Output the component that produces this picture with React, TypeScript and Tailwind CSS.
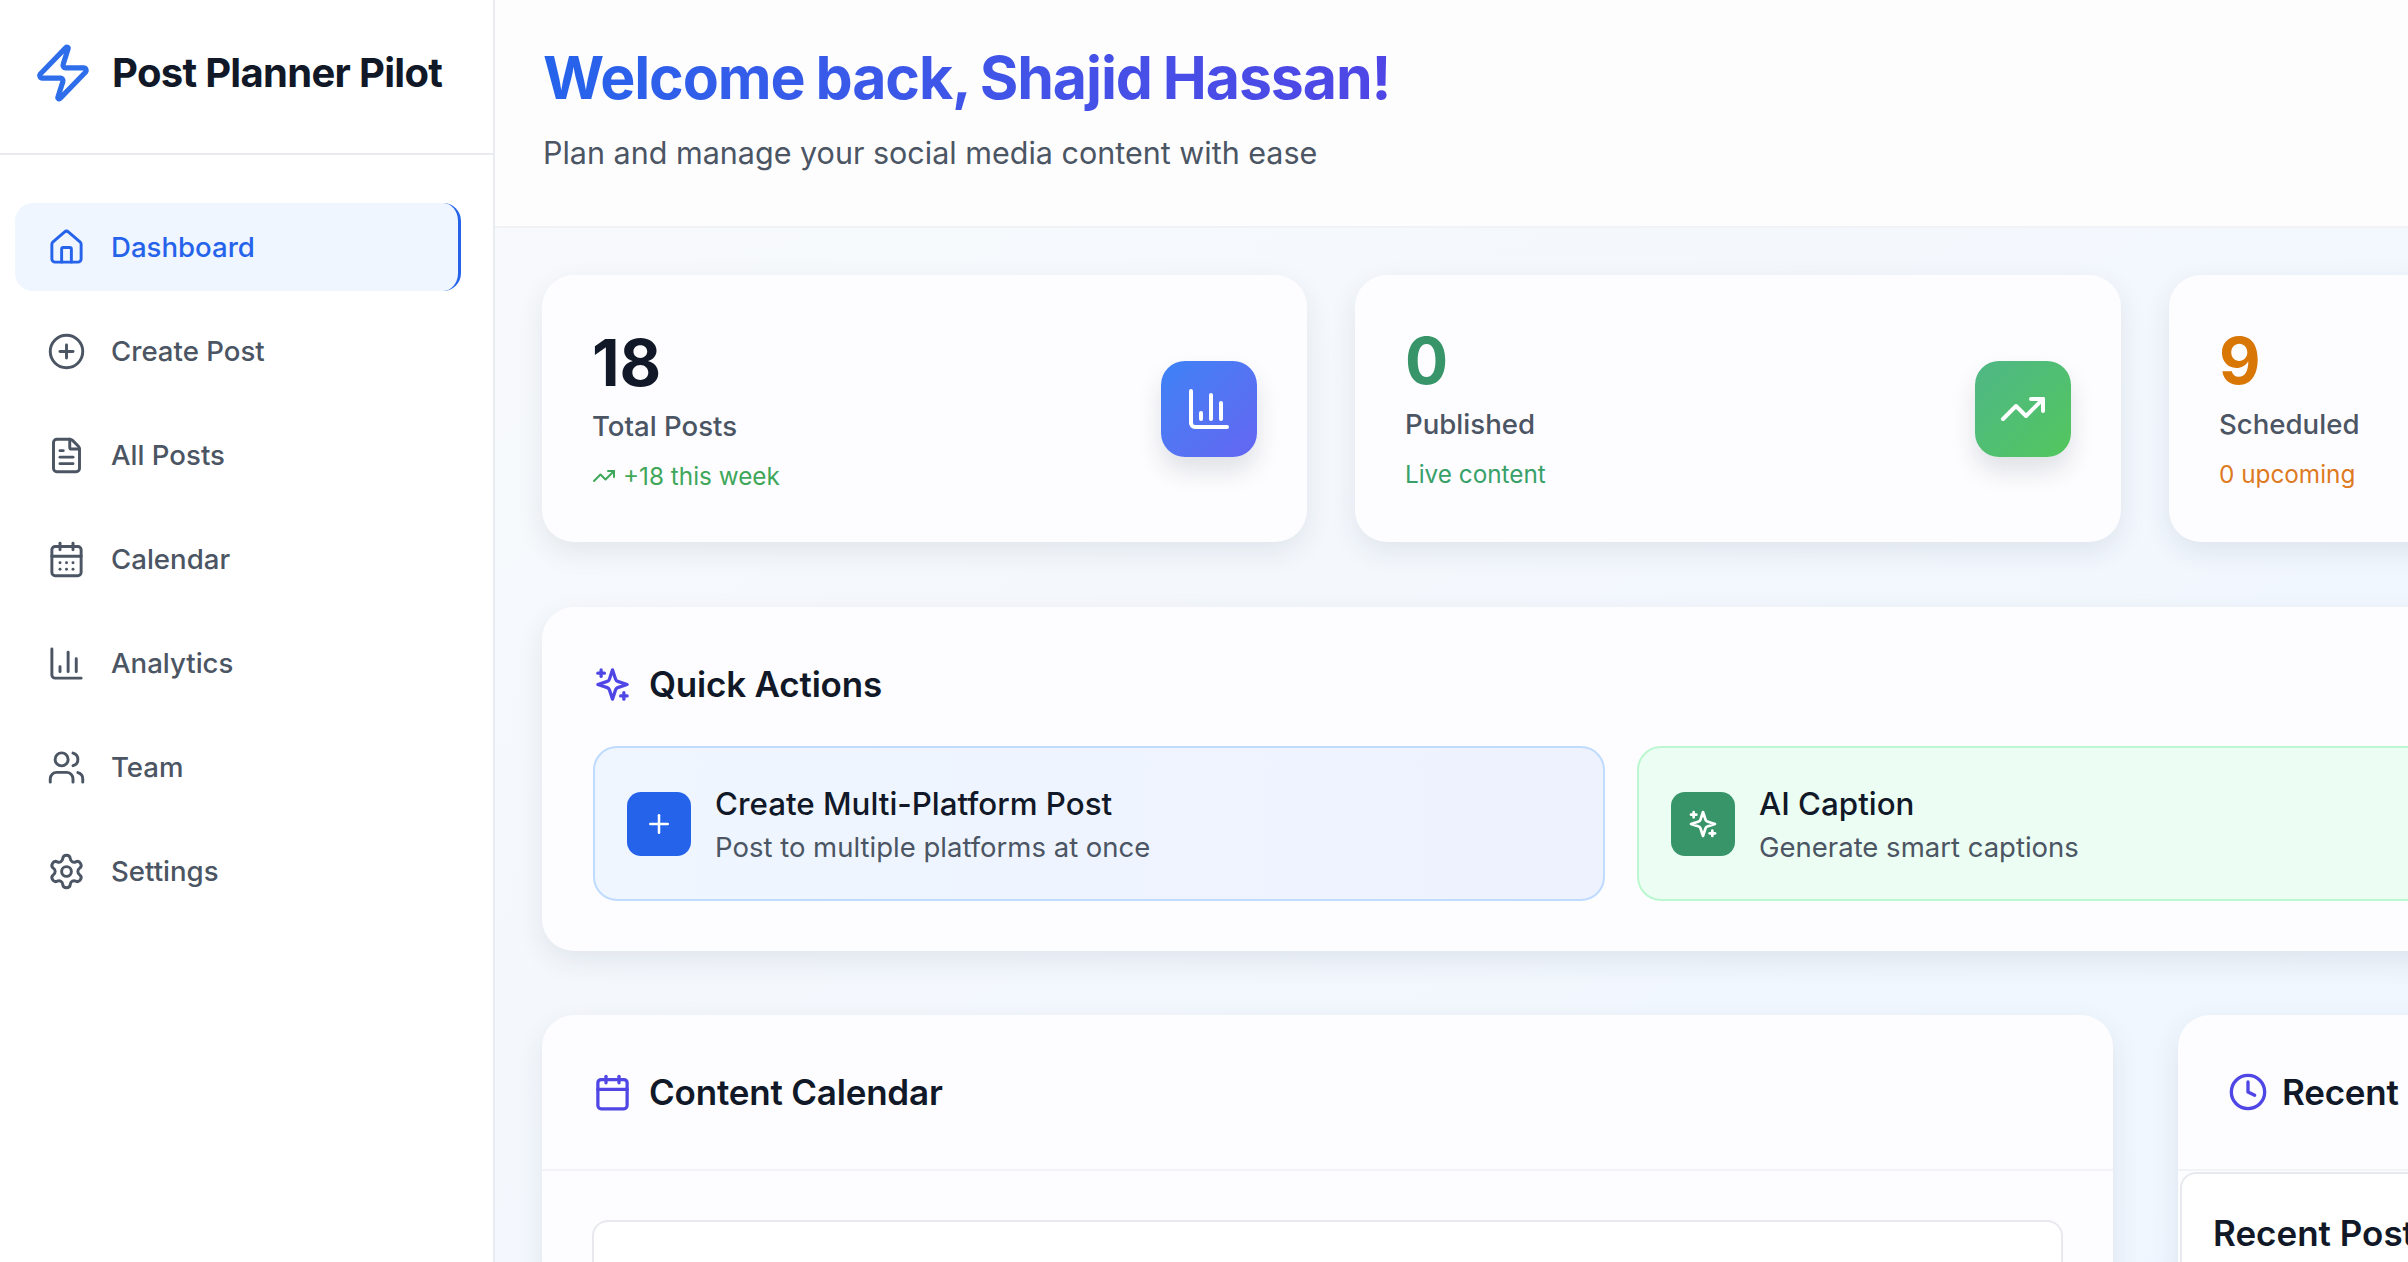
import React from "react";
import { Zap, House, CirclePlus, FileText, CalendarDays, ChartColumn, Users, Settings, TrendingUp, Plus, Clock, Calendar } from "lucide-react";

function Sparkle({ className, strokeWidth = 2 }: { className?: string; strokeWidth?: number }) {
  return (
    <svg viewBox="0 0 24 24" fill="none" stroke="currentColor" strokeWidth={strokeWidth} strokeLinecap="round" strokeLinejoin="round" className={className}>
      <path d="m12 3-1.912 5.813a2 2 0 0 1-1.275 1.275L3 12l5.813 1.912a2 2 0 0 1 1.275 1.275L12 21l1.912-5.813a2 2 0 0 1 1.275-1.275L21 12l-5.813-1.912a2 2 0 0 1-1.275-1.275L12 3Z" />
      <path d="M5 3v4" />
      <path d="M19 17v4" />
      <path d="M3 5h4" />
      <path d="M17 19h4" />
    </svg>
  );
}

const nav = [
  { label: "Create Post", Icon: CirclePlus },
  { label: "All Posts", Icon: FileText },
  { label: "Calendar", Icon: CalendarDays },
  { label: "Analytics", Icon: ChartColumn },
  { label: "Team", Icon: Users },
  { label: "Settings", Icon: Settings },
];

function Sidebar() {
  return (
    <aside className="w-[495px] shrink-0 h-full bg-white border-r-2 border-[#e9ebf0]">
      <div className="h-[155px] border-b-2 border-[#e9ebf0] flex items-center pl-[32px] gap-[18px] pb-[8px]">
        <Zap className="w-[62px] h-[62px] text-[#2f6eea] shrink-0" strokeWidth={2} />
        <span className="text-[40px] font-bold text-[#111827] tracking-[-0.7px] leading-none">Post Planner Pilot</span>
      </div>
      <nav className="pt-[48px] pl-[15px] w-[461px] box-content">
        <div className="h-[88px] w-[446px] rounded-[18px] bg-[#eff6ff] border-r-[3px] border-[#2563eb] flex items-center pl-[32px] gap-[25px] text-[#2563eb]">
          <House className="w-[39px] h-[39px] shrink-0" strokeWidth={1.8} />
          <span className="text-[27.6px] font-medium leading-none pt-[1px]">Dashboard</span>
        </div>
        <div className="mt-[16px] flex flex-col gap-[16px]">
          {nav.map(({ label, Icon }) => (
            <div key={label} className="h-[88px] w-[446px] flex items-center pl-[32px] gap-[25px] text-[#4b5563]">
              <Icon className="w-[39px] h-[39px] shrink-0" strokeWidth={1.8} />
              <span className="text-[27.6px] font-medium leading-none pt-[1px]">{label}</span>
            </div>
          ))}
        </div>
      </nav>
    </aside>
  );
}

function Stat({ value, label, valueColor, iconBox, Icon, sub }: { value: string; label: string; valueColor: string; iconBox: string; Icon: React.ElementType; sub: React.ReactNode }) {
  return (
    <div className="h-[267px] rounded-[32px] bg-[#fdfdff] shadow-[0_10px_28px_rgba(30,41,59,0.09)] flex items-center justify-between pl-[50px] pr-[50px]">
      <div className="pt-[4px]">
        <div className={`text-[64px] font-bold leading-[74px] -mt-[2px] ${valueColor}`}>{value}</div>
        <div className="text-[27.6px] font-medium leading-[40px] text-[#4b5563] mt-[6px]">{label}</div>
        <div className="mt-[12px] leading-[36px]">{sub}</div>
      </div>
      <div className={`w-[96px] h-[96px] rounded-[24px] flex items-center justify-center text-white shadow-[0_14px_24px_rgba(30,41,59,0.13)] ${iconBox}`}>
        <Icon className="w-[48px] h-[48px]" strokeWidth={2} />
      </div>
    </div>
  );
}

export default function App() {
  return (
    <div className="w-[2408px] h-[1262px] overflow-hidden flex bg-[#f5f8fd] font-['Inter',sans-serif]">
      <Sidebar />
      <main className="flex-1 min-w-0 h-full overflow-hidden bg-gradient-to-br from-[#f8fafc] to-[#eff6ff]">
        <header className="h-[228px] bg-[#fdfdfe] border-b-2 border-[#f0f2f6] pl-[48px] pt-[44px]">
          <h1 className="leading-[68px] text-[59px] font-bold tracking-[-1.1px] [word-spacing:-2px]">
            <span className="bg-gradient-to-r from-[#2563eb] to-[#4f46e5] bg-clip-text text-transparent">Welcome back, Shajid Hassan!</span>
          </h1>
          <p className="mt-[19px] text-[30.5px] leading-[44px] text-[#4b5563]">Plan and manage your social media content with ease</p>
        </header>

        <div className="w-[2391px] pl-[47px] pt-[47px]">
          <div className="grid grid-cols-[765px_766px_765px] gap-[48px]">
            <Stat value="18" label="Total Posts" valueColor="text-[#111827]" iconBox="bg-gradient-to-br from-[#3b82f6] to-[#6366f1]" Icon={ChartColumn}
              sub={<span className="flex items-center gap-[7px] text-[24.3px] text-[#3fa75a]"><TrendingUp className="w-[24px] h-[24px]" strokeWidth={2} />+18 this week</span>} />
            <Stat value="0" label="Published" valueColor="text-[#38956a]" iconBox="bg-gradient-to-br from-[#4fb785] to-[#53c65c]" Icon={TrendingUp}
              sub={<span className="text-[24.3px] text-[#38a169]">Live content</span>} />
            <Stat value="9" label="Scheduled" valueColor="text-[#d97706]" iconBox="bg-gradient-to-br from-[#f59e0b] to-[#f97316]" Icon={Clock}
              sub={<span className="text-[24.3px] text-[#dd7a1f]">0 upcoming</span>} />
          </div>

          <section className="mt-[65px] w-[2344px] h-[344px] rounded-[32px] bg-[#fdfdff] shadow-[0_10px_28px_rgba(30,41,59,0.09)] px-[51px] pt-[49px]">
            <div className="flex items-center gap-[17px] h-[56px]">
              <Sparkle className="w-[39px] h-[39px] text-[#4f46e5] shrink-0" />
              <h2 className="text-[35px] font-semibold leading-none text-[#111827] tracking-[-0.2px]">Quick Actions</h2>
            </div>
            <div className="mt-[34px] grid grid-cols-[1012px_1012px] gap-[32px]">
              <div className="h-[155px] rounded-[24px] border-2 border-[#bfdbfe] bg-gradient-to-r from-[#eff6ff] to-[#eef2ff] flex items-center pl-[32px] gap-[24px]">
                <div className="w-[64px] h-[64px] rounded-[14px] bg-[#2563eb] flex items-center justify-center text-white shrink-0">
                  <Plus className="w-[30px] h-[30px]" strokeWidth={2} />
                </div>
                <div className="pt-[1px]">
                  <div className="text-[31.3px] font-medium leading-[44px] text-[#111827]">Create Multi-Platform Post</div>
                  <div className="text-[27.5px] leading-[40px] text-[#4b5563] mt-[1px]">Post to multiple platforms at once</div>
                </div>
              </div>
              <div className="h-[155px] rounded-[24px] border-2 border-[#bbf7d0] bg-[#ecfdf3] flex items-center pl-[32px] gap-[24px]">
                <div className="w-[64px] h-[64px] rounded-[14px] bg-[#38956a] flex items-center justify-center text-white shrink-0">
                  <Sparkle className="w-[32px] h-[32px]" />
                </div>
                <div className="pt-[1px]">
                  <div className="text-[31.3px] font-medium leading-[44px] text-[#111827]">AI Caption</div>
                  <div className="text-[27.5px] leading-[40px] text-[#4b5563] mt-[1px]">Generate smart captions</div>
                </div>
              </div>
            </div>
          </section>

          <div className="mt-[64px] grid grid-cols-[1571px_755px] gap-[65px]">
            <section className="h-[300px] rounded-t-[32px] bg-[#fdfdff] shadow-[0_10px_28px_rgba(30,41,59,0.09)]">
              <div className="h-[156px] border-b-2 border-[#f1f3f6] flex items-center pl-[51px] gap-[17px]">
                <Calendar className="w-[39px] h-[39px] text-[#4f46e5] shrink-0" />
                <h2 className="text-[35px] font-semibold leading-none text-[#111827] tracking-[-0.2px]">Content Calendar</h2>
              </div>
              <div className="mt-[49px] mx-[50px] h-[100px] rounded-t-[16px] border-2 border-b-0 border-[#e7e9ee] bg-white" />
            </section>
            <section className="h-[300px] rounded-t-[32px] bg-[#fdfdff] shadow-[0_10px_28px_rgba(30,41,59,0.09)]">
              <div className="h-[156px] border-b-2 border-[#f1f3f6] flex items-center pl-[50px] gap-[14px]">
                <Clock className="w-[40px] h-[40px] text-[#4f46e5] shrink-0" />
                <h2 className="text-[35px] font-semibold leading-none text-[#111827] tracking-[-0.2px] whitespace-nowrap">Recent Activity</h2>
              </div>
              <div className="mt-[1px] mx-[2px] h-[140px] rounded-t-[16px] border-2 border-b-0 border-[#e7e9ee] bg-white pl-[31px] pt-[31px]">
                <div className="text-[35px] font-semibold leading-[56px] text-[#111827]">Recent Posts</div>
              </div>
            </section>
          </div>
        </div>
      </main>
    </div>
  );
}
